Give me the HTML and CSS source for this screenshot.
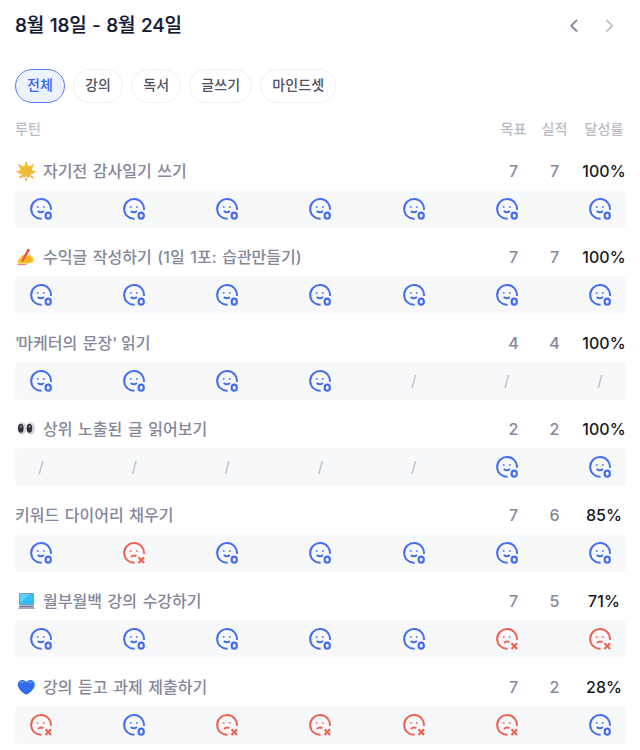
FILE: index.html
```html
<!DOCTYPE html>
<html lang="ko">
<head>
  <meta charset="UTF-8" />
  <title>주간 루틴</title>
  <meta name="viewport" content="width=device-width, initial-scale=1.0" />
  <link rel="stylesheet" href="styles.css">
</head>
<body>
  <!-- Icons -->
  <svg class="sprite" width="0" height="0">
    <symbol id="done" viewBox="0 0 24 24">
      <path d="M20.9 11.9A9.9 9.9 0 1 0 11.6 20.8" stroke-width="2" />
      <path d="M7.7 8.2v1.6M13.8 8.2v1.6" stroke-width="1.7" />
      <path d="M7.7 13q3.1 2.6 6.2 0" stroke-width="1.9" />
      <ellipse cx="18.2" cy="17.7" rx="2.6" ry="3" stroke-width="2.2" />
    </symbol>
    <symbol id="fail" viewBox="0 0 24 24">
      <path d="M20.9 11.9A9.9 9.9 0 1 0 11.6 20.8" stroke-width="2" />
      <path d="M7.7 8.2v1.6M13.8 8.2v1.6" stroke-width="1.7" />
      <path d="M7.9 15q2.7-2.5 5.5-.9" stroke-width="1.9" />
      <path d="M15.5 15.3l5.6 5.7M21.1 15.3l-5.6 5.7" stroke-width="2.2" />
    </symbol>
  </svg>

  <div class="page">
    <!-- Header -->
    <div class="header">
      <h1>8월 18일 - 8월 24일</h1>
      <div class="nav">
        <svg class="prev" width="20" height="20" viewBox="0 0 20 20"><path d="M13 5L7.2 10.7L13 16.5" /></svg>
        <svg class="next" width="20" height="20" viewBox="0 0 20 20"><path d="M7.5 5L13.3 10.7L7.5 16.5" /></svg>
      </div>
    </div>

    <!-- Tabs -->
    <div class="tabs" id="tabs">
      <div class="tab active">전체</div>
      <div class="tab">강의</div>
      <div class="tab">독서</div>
      <div class="tab">글쓰기</div>
      <div class="tab">마인드셋</div>
    </div>

    <div class="row labels">
      <span class="name">루틴</span>
      <span class="goal">목표</span>
      <span class="count">실적</span>
      <span class="rate">달성률</span>
    </div>

    <div class="routine">
      <div class="row">
        <svg class="emoji" width="20" height="20" viewBox="0 0 20 20">
          <path d="M10.2 1.5v2M3.2 4.2l1.6 1.4M17 4l-1.6 1.5M1.5 10.5h1.7M17.3 10.5h1.5M4 16.6l1.4-1.4M16.6 16.6l-1.4-1.4M10.2 17.5v1.4" stroke="#f3a33c" stroke-width="1.7" stroke-linecap="round" />
          <path d="M10.2 3.2l2 2.6 4-.5-.8 3.7 2 3-3.6 1-.8 3.2-2.8-1.4-2.9 1.4-.8-3.2-3.5-1 2-3-.8-3.7 4 .5z" fill="#f2bc32" stroke="#f2bc32" stroke-width="1.2" stroke-linejoin="round" />
        </svg>
        <span class="name">자기전 감사일기 쓰기</span>
        <span class="goal">7</span><span class="count">7</span><span class="rate">100%</span>
      </div>
      <div class="days" data-days="ooooooo"></div>
    </div>

    <div class="routine">
      <div class="row">
        <svg class="emoji" width="20" height="20" viewBox="0 0 20 20">
          <path d="M2 13.2l4.7-5.4 3 .2-1.2 2.2 5-2.4c1.4-.3 1.9.8 1 1.6l1.8.1c1.2.4 1.2 1.3.3 1.9 1.3.2 1.4 1.4.3 1.9 1.2.6.8 1.7-.5 2l-5.6 1.5H2z" fill="#fcc330" />
          <path d="M10 10.8l4.8-1.5M10.5 12.9l5.6-1.4M10 15l5.8-1.6" stroke="#ec9724" stroke-width=".7" />
          <path d="M11.8 1.6l2.4 1.2-6.4 11-2.6 2 .5-3.3z" fill="#ee5840" />
          <path d="M1.5 17.6h9" stroke="#e9785b" />
        </svg>
        <span class="name">수익글 작성하기 (1일 1포: 습관만들기)</span>
        <span class="goal">7</span><span class="count">7</span><span class="rate">100%</span>
      </div>
      <div class="days" data-days="ooooooo"></div>
    </div>

    <div class="routine">
      <div class="row">
        <span class="name"><span class="quote">'</span>마케터의 문장<span class="quote">'</span> 읽기</span>
        <span class="goal">4</span><span class="count">4</span><span class="rate">100%</span>
      </div>
      <div class="days" data-days="oooo///"></div>
    </div>

    <div class="routine">
      <div class="row">
        <svg class="emoji" width="20" height="20" viewBox="0 0 20 20">
          <ellipse cx="6" cy="9.5" rx="4.2" ry="6.2" fill="#d5d4de" />
          <ellipse cx="14.8" cy="9.5" rx="4.2" ry="6.2" fill="#d5d4de" />
          <ellipse cx="4.8" cy="9.3" rx="2.8" ry="4.5" fill="#34303f" />
          <ellipse cx="13.4" cy="9.3" rx="2.8" ry="4.5" fill="#34303f" />
          <circle cx="5" cy="7.5" r=".9" fill="#aaa7b8" />
          <circle cx="13.6" cy="7.5" r=".9" fill="#aaa7b8" />
        </svg>
        <span class="name">상위 노출된 글 읽어보기</span>
        <span class="goal">2</span><span class="count">2</span><span class="rate">100%</span>
      </div>
      <div class="days" data-days="/////oo"></div>
    </div>

    <div class="routine">
      <div class="row">
        <span class="name">키워드 다이어리 채우기</span>
        <span class="goal">7</span><span class="count">6</span><span class="rate">85%</span>
      </div>
      <div class="days" data-days="oxooooo"></div>
    </div>

    <div class="routine">
      <div class="row">
        <svg class="emoji" width="20" height="20" viewBox="0 0 20 20">
          <rect x="3" y="2" width="15" height="12.5" rx="1" fill="#8791a5" />
          <path d="M4 3h13v10.5H4z" fill="#36bdf5" />
          <path d="M4 3h10L4 12z" fill="#5bd2fa" />
          <path d="M3.5 14.5h14l1.6 3.5H1.9z" fill="#a7a9bb" />
          <path d="M4 15.5h13" stroke="#777d91" />
        </svg>
        <span class="name">월부월백 강의 수강하기</span>
        <span class="goal">7</span><span class="count">5</span><span class="rate">71%</span>
      </div>
      <div class="days" data-days="oooooxx"></div>
    </div>

    <div class="routine">
      <div class="row">
        <svg class="emoji" width="20" height="20" viewBox="0 0 20 20">
          <path d="M10.3 17.8C5 15 1.8 11.3 1.8 7.3c0-4.7 6-6 8.5-2 2.5-4 8.5-2.7 8.5 2 0 4-3.2 7.7-8.5 10.5z" fill="#2f6cf0" />
          <path d="M4 6.3c.6-1.5 2.6-1.7 3.7-.7M12.5 5.8c1.2-1.2 3.2-1 4 .5" stroke="#609bfb" stroke-width="1.3" />
        </svg>
        <span class="name">강의 듣고 과제 제출하기</span>
        <span class="goal">7</span><span class="count">2</span><span class="rate">28%</span>
      </div>
      <div class="days" data-days="xoxxxxo"></div>
    </div>
  </div>

  <script src="script.js"></script>
</body>
</html>
```
FILE: styles.css
```css
* {
  box-sizing: border-box;
}

body {
  margin: 0;
  background-color: #fff;
  font-family: Inter, "Noto Sans CJK KR", sans-serif;
  color: #1b1d2d;
  height: 750px;
  overflow: hidden;
}

svg {
  fill: none;
  flex-shrink: 0;
}

.sprite {
  position: absolute;
}

.page {
  padding: 10px 14px 0 15px;
}

.header {
  display: flex;
  justify-content: space-between;
  align-items: center;
  height: 30px;
}

h1 {
  margin: 0;
  padding-top: 2px;
  font-size: 19px;
  font-weight: 500;
  line-height: 30px;
  letter-spacing: -0.2px;
  word-spacing: 0.8px;
  color: #141a35;
  -webkit-text-stroke: 0.2px #141a35;
}

.nav {
  display: flex;
  gap: 15px;
  padding-right: 7px;
}

.nav path {
  stroke-width: 1.8;
}

.prev {
  stroke: #858699;
}

.next {
  stroke: #c0c1cc;
}

.tabs {
  display: flex;
  gap: 8px;
  margin-top: 29px;
}

.tab {
  height: 34px;
  padding: 0 11px;
  border: 1px solid #f0f0f3;
  border-radius: 17px;
  font-size: 14px;
  font-weight: 500;
  line-height: 29px;
  letter-spacing: 0.15px;
  color: #505264;
  cursor: pointer;
}

.tab.active {
  background-color: #edf2ff;
  border-color: #5b7ff5;
  color: #3267f5;
}

.row {
  display: flex;
  align-items: center;
  height: 38px;
  font-size: 16px;
  font-weight: 500;
  color: #85879b;
}

.name {
  flex: 1;
  padding-bottom: 2px;
  white-space: nowrap;
  word-spacing: 1.4px;
}

.quote {
  letter-spacing: -1.8px;
}

.emoji {
  margin-left: 1px;
  margin-right: 7px;
}

.goal,
.count {
  width: 41px;
  text-align: center;
}

.rate {
  width: 58px;
  margin-right: -7px;
  text-align: center;
  letter-spacing: 0.1px;
  color: #171822;
}

.row.labels {
  height: 30px;
  margin-top: 10px;
  margin-bottom: 9px;
  font-size: 14px;
  font-weight: 500;
  color: #b9bac6;
}

.labels .name {
  padding-bottom: 0;
}

.labels .rate {
  color: #b9bac6;
}

.routine {
  height: 86px;
}

.days {
  display: flex;
  justify-content: space-between;
  align-items: center;
  height: 38px;
  padding: 0 15px;
  background-color: #f7f8fa;
  border-radius: 4px;
}

.day {
  width: 22px;
  height: 24px;
  font-size: 15px;
  line-height: 23px;
  text-align: center;
  color: #b8b9c4;
}

.day svg {
  display: block;
  width: 24px;
  height: 24px;
  margin-top: 1px;
  stroke: #456df0;
}

.day .fail {
  stroke: #ec6451;
}
```
FILE: script.js
```js
const icons = { o: "done", x: "fail" };

// 요일별 달성 여부 표시
document.querySelectorAll(".days").forEach((row) => {
  row.innerHTML = [...row.dataset.days].map((day) => {
    const icon = icons[day];
    return icon
      ? `<div class="day"><svg class="${icon}"><use href="#${icon}" /></svg></div>`
      : `<div class="day">/</div>`;
  }).join("");
});
```
